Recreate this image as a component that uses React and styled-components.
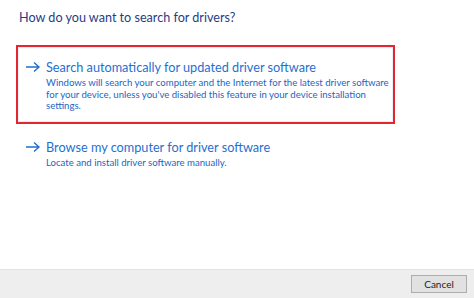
import React from "react";
import styled, { createGlobalStyle } from "styled-components";

const Global = createGlobalStyle`
  html, body { margin: 0; padding: 0; background: #fff; }
  body { width: 474px; height: 298px; overflow: hidden; font-family: Lato, "Open Sans", sans-serif; }
`;

const Window = styled.div`
  width: 474px;
  height: 298px;
  display: flex;
  flex-direction: column;
  background: #fff;
`;

const Body = styled.div`
  flex: 1;
  padding: 9px 0 0 16px;
  display: flex;
  flex-direction: column;
`;

const Heading = styled.h1`
  margin: 0 0 18px 3px;
  font-size: 12.6px;
  font-weight: 400;
  color: #1f3d87;
  line-height: 18px;
`;

const Option = styled.div`
  width: 379px;
  box-sizing: border-box;
  display: flex;
  gap: 5px;
  padding: 11px 8px 10px 7px;
  border: 2px solid ${(p) => (p.$selected ? "#e3262f" : "transparent")};
  box-shadow: ${(p) => (p.$selected ? "inset 0 0 0 1px #e8eef6" : "none")};
  margin-bottom: 1px;
`;

const Arrow = styled.svg`
  flex: none;
  width: 16px;
  height: 12px;
  margin-top: 3px;
`;

const Texts = styled.div`
  display: flex;
  flex-direction: column;
`;

const Title = styled.div`
  font-size: 12.7px;
  line-height: 18px;
  color: #1f6fd1;
  margin-bottom: 1px;
`;

const Desc = styled.div`
  font-size: 9.6px;
  line-height: 11.6px;
  color: #2166c4;
  white-space: nowrap;
`;

const Footer = styled.div`
  height: 28px;
  background: #eeeeee;
  border-top: 1px solid #e3e3e3;
  display: flex;
  justify-content: flex-end;
  align-items: center;
  padding-right: 7px;
`;

const Button = styled.button`
  width: 56px;
  height: 18px;
  background: #e1e1e1;
  border: 1px solid #adadad;
  font-family: inherit;
  font-size: 10px;
  color: #222;
  padding: 0;
`;

const ArrowIcon = () => (
  <Arrow viewBox="0 0 16 12">
    <path d="M1 6h13M9 1.5l5 4.5-5 4.5" fill="none" stroke="#1f6fd1" strokeWidth="1.4" />
  </Arrow>
);

export default function App() {
  return (
    <>
      <Global />
      <Window>
        <Body>
          <Heading>How do you want to search for drivers?</Heading>
          <Option $selected>
            <ArrowIcon />
            <Texts>
              <Title>Search automatically for updated driver software</Title>
              <Desc>
                Windows will search your computer and the Internet for the latest driver software
                <br />
                for your device, unless you've disabled this feature in your device installation
                <br />
                settings.
              </Desc>
            </Texts>
          </Option>
          <Option>
            <ArrowIcon />
            <Texts>
              <Title>Browse my computer for driver software</Title>
              <Desc>Locate and install driver software manually.</Desc>
            </Texts>
          </Option>
        </Body>
        <Footer>
          <Button>Cancel</Button>
        </Footer>
      </Window>
    </>
  );
}
